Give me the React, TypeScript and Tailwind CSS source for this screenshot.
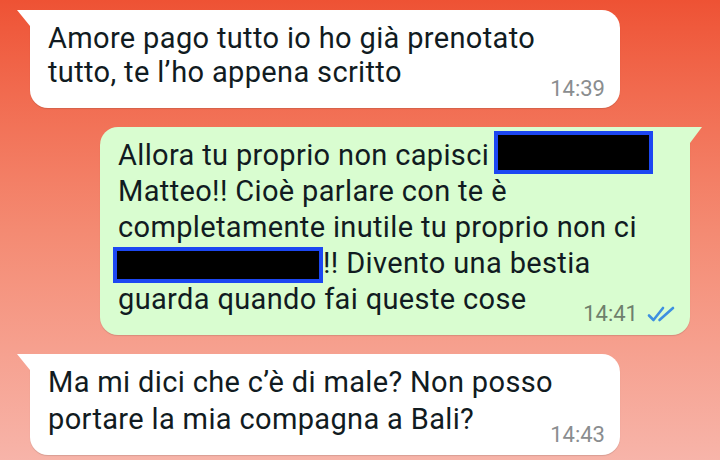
import React from "react";

function Ticks() {
  return (
    <svg width="28" height="16" viewBox="0 0 28 16" fill="none" className="ml-[9px] mb-[1px]">
      <path d="M2 9.5l4.5 4.5L16 2" stroke="#3d8fe0" strokeWidth="2.6" strokeLinecap="round" strokeLinejoin="round" />
      <path d="M12.5 14L26 2" stroke="#3d8fe0" strokeWidth="2.6" strokeLinecap="round" />
    </svg>
  );
}

function Redacted({ className }: { className: string }) {
  return <span className={`inline-block align-top bg-black border-[4px] border-[#1c47f2] ${className}`} />;
}

export default function App() {
  return (
    <div
      className="w-[720px] h-[460px] overflow-hidden bg-gradient-to-b from-[#ee5234] via-[#f48a72] to-[#f7b4a9] flex flex-col gap-[19px] pt-[10px]"
      style={{ fontFamily: "Roboto, 'Noto Sans', sans-serif" }}
    >
      {/* incoming */}
      <div className="relative ml-[30px] w-[590px] bg-white rounded-[18px] rounded-tl-none shadow-[0_1px_1px_rgba(0,0,0,0.12)] pl-[18px] pr-[15px] pt-[11px] pb-[8px] flex flex-col">
        <span className="absolute left-[-13px] top-0 w-0 h-0 border-t-[16px] border-t-white border-l-[13px] border-l-transparent" />
        <p className="text-[29px] tracking-[0.35px] leading-[34px] text-[#111b21]">
          Amore pago tutto io ho già prenotato
          <br />
          tutto, te l’ho appena scritto
        </p>
        <div className="-mt-[11px] self-end text-[22px] leading-[22px] text-[#8a8d8f]">14:39</div>
      </div>

      {/* outgoing */}
      <div className="relative ml-[100px] w-[590px] bg-[#d9fdd0] rounded-[18px] rounded-tr-none shadow-[0_1px_1px_rgba(0,0,0,0.12)] pl-[18px] pr-[15px] pt-[10px] pb-[10px] flex flex-col">
        <span className="absolute right-[-12px] top-0 w-0 h-0 border-t-[16px] border-t-[#d9fdd0] border-r-[12px] border-r-transparent" />
        <p className="text-[29px] tracking-[0.35px] leading-[36px] text-[#111b21]">
          Allora tu proprio non capisci{" "}
          <Redacted className="w-[159px] h-[43px] -ml-[3px] -mt-[6px] -mb-[7px]" />
          <br />
          Matteo!! Cioè parlare con te è
          <br />
          completamente inutile tu proprio non ci
          <br />
          <Redacted className="w-[210px] h-[36px] -ml-[5px] mt-[2px] -mb-[2px]" />
          !! Divento una bestia
          <br />
          guarda quando fai queste cose
        </p>
        <div className="-mt-[14px] self-end flex items-center text-[22px] leading-[22px] text-[#6e7f6c]">
          14:41
          <Ticks />
        </div>
      </div>

      {/* incoming */}
      <div className="relative ml-[30px] w-[590px] bg-white rounded-[18px] rounded-tl-none shadow-[0_1px_1px_rgba(0,0,0,0.12)] pl-[18px] pr-[15px] pt-[10px] pb-[9px] flex flex-col">
        <span className="absolute left-[-13px] top-0 w-0 h-0 border-t-[16px] border-t-white border-l-[13px] border-l-transparent" />
        <p className="text-[29px] tracking-[0.35px] leading-[37px] text-[#111b21]">
          Ma mi dici che c’è di male? Non posso
          <br />
          portare la mia compagna a Bali?
        </p>
        <div className="-mt-[14px] self-end text-[22px] leading-[22px] text-[#8a8d8f]">14:43</div>
      </div>
    </div>
  );
}
